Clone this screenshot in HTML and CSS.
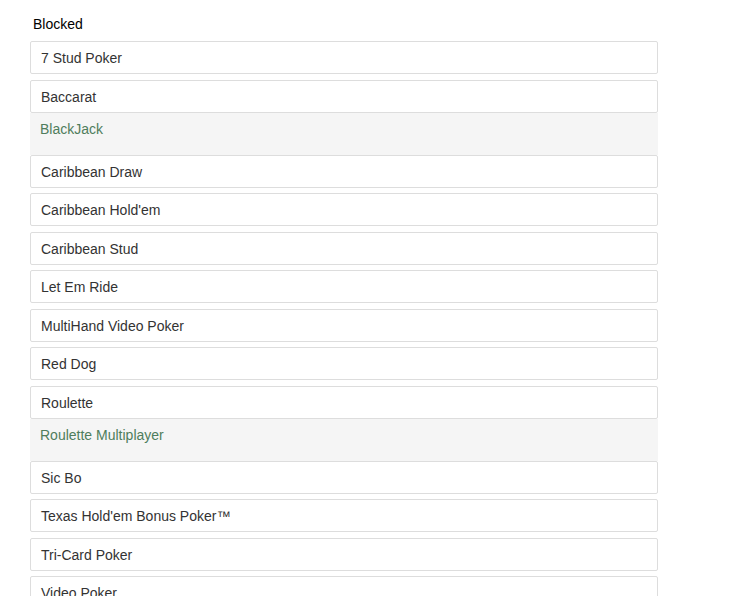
FILE: index.html
```html
<!DOCTYPE html>
<html lang="en">
<head>
    <meta charset="UTF-8">
    <meta name="viewport" content="width=device-width, initial-scale=1.0">
    <title>Blocked Games</title>
    <link rel="stylesheet" href="styles.css">
</head>
<body>
    <div id="container">
        <label class="listTitle">Blocked</label>
        <ul id="gameList">
            <li class="game">7 Stud Poker</li>
            <li class="game">Baccarat</li>
            <li class="game selected">BlackJack</li>
            <li class="game">Caribbean Draw</li>
            <li class="game">Caribbean Hold'em</li>
            <li class="game">Caribbean Stud</li>
            <li class="game">Let Em Ride</li>
            <li class="game">MultiHand Video Poker</li>
            <li class="game">Red Dog</li>
            <li class="game">Roulette</li>
            <li class="game selected">Roulette Multiplayer</li>
            <li class="game">Sic Bo</li>
            <li class="game">Texas Hold'em Bonus Poker™</li>
            <li class="game">Tri-Card Poker</li>
            <li class="game">Video Poker</li>
        </ul>
    </div>
</body>
</html>
```

FILE: styles.css
```css
body {
    margin: 0;
    background-color: white;
    font-family: "Liberation Sans", Arial, Helvetica, sans-serif;
    font-size: 14px;
    color: #333;
    overflow: hidden;
}

#container {
    width: 628px;
    padding: 14px 0px 0px 30px;
}

.listTitle {
    display: block;
    padding-left: 3px;
    line-height: 20px;
    color: #000;
    margin-bottom: 7px;
}

#gameList {
    list-style: none;
    margin: 0;
    padding: 0;
}

.game {
    padding: 7px 10px 5px 10px;
    line-height: 19px;
    border: 1px solid #ddd;
    border-radius: 2px;
    margin-bottom: 5.5px;
    background-color: white;
}

.selected {
    border: none;
    border-radius: 0px;
    background-color: #f5f5f5;
    color: #4f7d5c;
    padding: 7px 10px 16px 10px;
    margin-top: -5.5px;
    margin-bottom: 0px;
}
```
